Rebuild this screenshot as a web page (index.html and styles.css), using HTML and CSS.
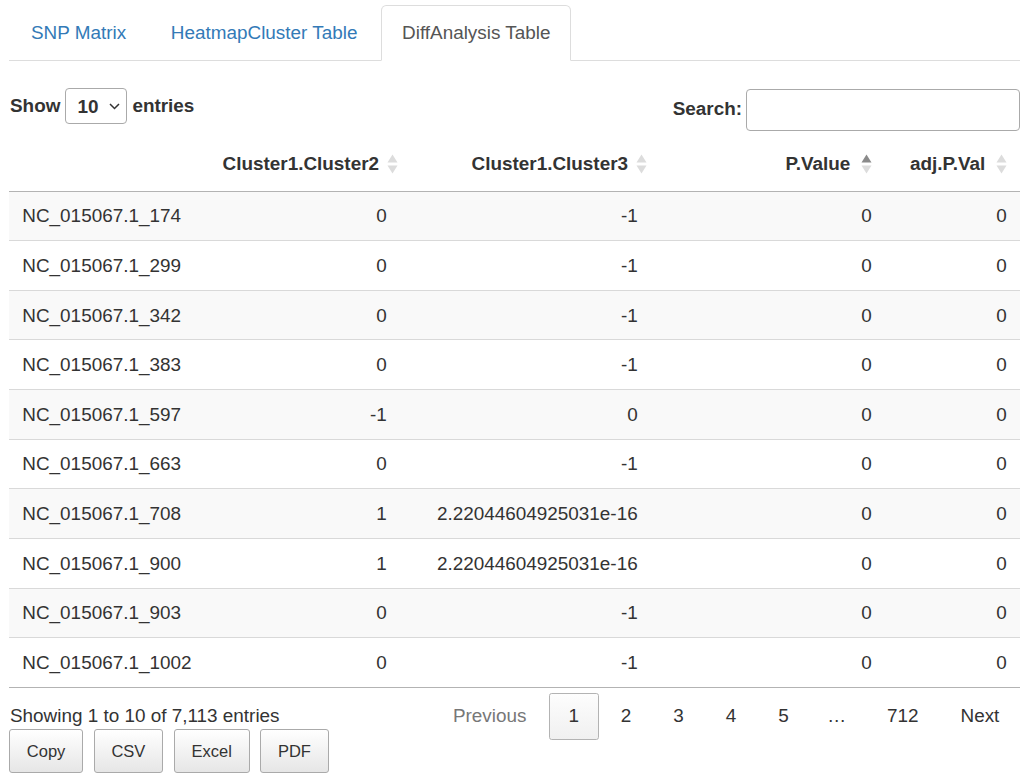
FILE: index.html
```html
<!DOCTYPE html>
<html>
<head>
<meta charset="utf-8">
<link rel="stylesheet" href="styles.css">
</head>
<body>
<div class="wrap">
  <ul class="tabs">
    <li class="tab"><a>SNP Matrix</a></li>
    <li class="tab"><a>HeatmapCluster Table</a></li>
    <li class="tab active"><a>DiffAnalysis Table</a></li>
  </ul>
  <div class="toolbar">
    <label class="length">Show
      <span class="select-wrap">
        <select class="select"><option>10</option></select>
        <svg class="chev" width="11" height="7" viewBox="0 0 11 7"><polyline points="1,1 5.5,5.5 10,1" fill="none" stroke="#333" stroke-width="1.5"/></svg>
      </span>
      entries</label>
    <label class="filter">Search:<input class="search" type="text"></label>
  </div>
  <table class="dt">
    <colgroup>
      <col class="c1"><col class="c2"><col class="c3"><col class="c4"><col class="c5">
    </colgroup>
    <thead>
      <tr>
        <th class="h1"></th>
        <th class="h2">Cluster1.Cluster2<svg class="sort" width="11" height="20" viewBox="0 0 11 20"><polygon points="0.5,8.5 5.5,0.5 10.5,8.5" class="up"/><polygon points="0.5,11.5 10.5,11.5 5.5,19.5" class="down"/></svg></th>
        <th class="h3">Cluster1.Cluster3<svg class="sort" width="11" height="20" viewBox="0 0 11 20"><polygon points="0.5,8.5 5.5,0.5 10.5,8.5" class="up"/><polygon points="0.5,11.5 10.5,11.5 5.5,19.5" class="down"/></svg></th>
        <th class="h4">P.Value<svg class="sort" width="11" height="20" viewBox="0 0 11 20"><polygon points="0.5,8.5 5.5,0.5 10.5,8.5" class="up on"/><polygon points="0.5,11.5 10.5,11.5 5.5,19.5" class="down"/></svg></th>
        <th class="h5">adj.P.Val<svg class="sort" width="11" height="20" viewBox="0 0 11 20"><polygon points="0.5,8.5 5.5,0.5 10.5,8.5" class="up"/><polygon points="0.5,11.5 10.5,11.5 5.5,19.5" class="down"/></svg></th>
      </tr>
    </thead>
    <tbody>
      <tr><td>NC_015067.1_174</td><td class="r">0</td><td class="r">-1</td><td class="r">0</td><td class="r">0</td></tr>
      <tr><td>NC_015067.1_299</td><td class="r">0</td><td class="r">-1</td><td class="r">0</td><td class="r">0</td></tr>
      <tr><td>NC_015067.1_342</td><td class="r">0</td><td class="r">-1</td><td class="r">0</td><td class="r">0</td></tr>
      <tr><td>NC_015067.1_383</td><td class="r">0</td><td class="r">-1</td><td class="r">0</td><td class="r">0</td></tr>
      <tr><td>NC_015067.1_597</td><td class="r">-1</td><td class="r">0</td><td class="r">0</td><td class="r">0</td></tr>
      <tr><td>NC_015067.1_663</td><td class="r">0</td><td class="r">-1</td><td class="r">0</td><td class="r">0</td></tr>
      <tr><td>NC_015067.1_708</td><td class="r">1</td><td class="r">2.22044604925031e-16</td><td class="r">0</td><td class="r">0</td></tr>
      <tr><td>NC_015067.1_900</td><td class="r">1</td><td class="r">2.22044604925031e-16</td><td class="r">0</td><td class="r">0</td></tr>
      <tr><td>NC_015067.1_903</td><td class="r">0</td><td class="r">-1</td><td class="r">0</td><td class="r">0</td></tr>
      <tr><td>NC_015067.1_1002</td><td class="r">0</td><td class="r">-1</td><td class="r">0</td><td class="r">0</td></tr>
    </tbody>
  </table>
  <div class="footer">
    <div class="info">Showing 1 to 10 of 7,113 entries</div>
    <div class="buttons">
      <button class="btn">Copy</button>
      <button class="btn">CSV</button>
      <button class="btn">Excel</button>
      <button class="btn">PDF</button>
    </div>
    <div class="paginate">
      <a class="pb disabled">Previous</a>
      <a class="pb current">1</a>
      <a class="pb">2</a>
      <a class="pb">3</a>
      <a class="pb">4</a>
      <a class="pb">5</a>
      <span class="ellipsis">…</span>
      <a class="pb">712</a>
      <a class="pb">Next</a>
    </div>
  </div>
</div>
</body>
</html>
```
FILE: styles.css
```css
* { box-sizing: border-box; }
html, body { margin: 0; padding: 0; background: #fff; }
body {
  font-family: "Liberation Sans", Arial, Helvetica, sans-serif;
  font-size: 18.9px;
  line-height: 26.67px;
  color: #333;
}
.wrap { padding: 5px 7px 0 9px; }

.tabs {
  list-style: none;
  margin: 0;
  padding: 0 0 0 1px;
  display: flex;
  border-bottom: 1px solid #ddd;
}
.tab { margin-bottom: -1px; }
.tab a {
  display: block;
  padding: 13.83px 20px;
  line-height: 26.67px;
  margin-right: 2.67px;
  border: 1px solid transparent;
  border-radius: 5.33px 5.33px 0 0;
  color: #337ab7;
}
.tab.active a {
  color: #555;
  background: #fff;
  border-color: #ddd;
  border-bottom-color: #fff;
}

.toolbar {
  display: flex;
  justify-content: space-between;
  align-items: flex-start;
  margin-top: 27px;
}
.length {
  display: flex;
  align-items: center;
  font-weight: bold;
  height: 36px;
  padding-left: 1px;
}
.select-wrap {
  position: relative;
  display: inline-block;
  margin: 0 5px 0 5px;
}
.select {
  appearance: none;
  -webkit-appearance: none;
  width: 62px;
  height: 36px;
  border: 1px solid #aaa;
  border-radius: 4px;
  background: #fff;
  font-family: inherit;
  font-size: 18.9px;
  font-weight: bold;
  color: #333;
  padding: 0 0 0 11px;
  margin: 0;
}
.chev {
  position: absolute;
  right: 7px;
  top: 15px;
}
.filter {
  display: flex;
  align-items: center;
  font-weight: bold;
  height: 42px;
  padding-top: 1px;
}
.search {
  width: 274px;
  height: 42px;
  margin-left: 4px;
  border: 1px solid #aaa;
  border-radius: 4px;
  background: #fff;
  font-family: inherit;
  font-size: 18.9px;
  padding: 4px 6px;
}

.dt {
  width: 1011px;
  border-collapse: collapse;
  margin-top: 7px;
  border-bottom: 1px solid #b3b3b3;
  table-layout: fixed;
}
.c1 { width: 200px; }
.c2 { width: 191px; }
.c3 { width: 251px; }
.c4 { width: 234px; }
.c5 { width: 135px; }

.dt th {
  position: relative;
  font-weight: bold;
  text-align: right;
  padding: 13.33px 34.67px 13.33px 13.33px;
  line-height: 26.67px;
  border-bottom: 1px solid #b3b3b3;
  white-space: nowrap;
}
.dt th.h2 { padding-right: 21px; }
.dt th.h3 { padding-right: 23px; }
.sort {
  position: absolute;
  right: 13.33px;
  top: 50%;
  margin-top: -10px;
}
.h2 .sort { right: 2px; }
.h3 .sort { right: 4px; }
.sort polygon { fill: #dcdcdc; }
.sort polygon.on { fill: #8a8a8a; }

.dt td {
  padding: 10.67px 13.33px;
  line-height: 27.3px;
  border-top: 1px solid #d9d9d9;
  white-space: nowrap;
}
.dt tbody tr:first-child td { border-top: 0; }
.dt tbody tr:nth-child(odd) td { background: #f9f9f9; }
.dt td.r { text-align: right; }

.footer {
  display: grid;
  grid-template-columns: 1fr auto;
  grid-template-rows: auto auto;
}
.info {
  grid-column: 1;
  grid-row: 1;
  padding-top: 15px;
  line-height: 26.67px;
  padding-left: 1px;
}
.buttons {
  grid-column: 1;
  grid-row: 2;
  display: flex;
  gap: 10.5px;
}
.btn {
  height: 44px;
  padding: 0 16.8px;
  font-family: inherit;
  font-size: 16.5px;
  color: #333;
  border: 1px solid #aaa;
  border-radius: 3px;
  background: linear-gradient(to bottom, #ffffff 0%, #e6e6e6 100%);
  margin: 0;
}
.paginate {
  grid-column: 2;
  grid-row: 1 / span 2;
  display: flex;
  align-items: flex-start;
  padding-top: 5px;
  padding-right: 1px;
}
.pb {
  display: block;
  min-width: 28px;
  padding: 9.33px 18.67px;
  line-height: 26.67px;
  margin-left: 2.67px;
  border: 1px solid transparent;
  border-radius: 2.67px;
  color: #333;
  text-align: center;
}
.pb.disabled { color: #777; }
.pb.current {
  border: 1px solid #b3b3b3;
  background: linear-gradient(to bottom, #fdfdfd 0%, #f0f0f0 100%);
}
.ellipsis {
  display: block;
  padding: 10.33px 18.67px;
  line-height: 26.67px;
}
```
